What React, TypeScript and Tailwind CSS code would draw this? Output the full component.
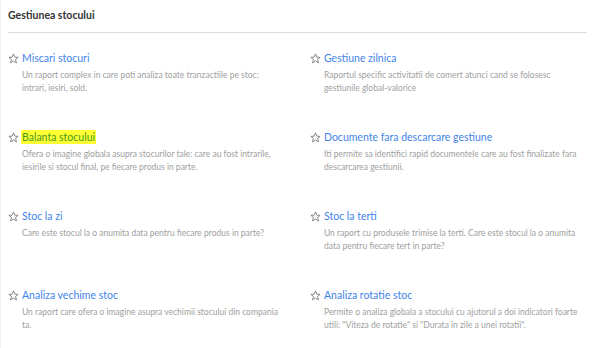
import React from "react";

const items = [
  { t: "Miscari stocuri", d: "Un raport complex in care poti analiza toate tranzactiile pe stoc: intrari, iesiri, sold." },
  { t: "Gestiune zilnica", d: "Raportul specific activitatii de comert atunci cand se folosesc gestiunile global-valorice" },
  { t: "Balanta stocului", d: "Ofera o imagine globala asupra stocurilor tale: care au fost intrarile, iesirile si stocul final, pe fiecare produs in parte.", hl: true },
  { t: "Documente fara descarcare gestiune", d: "Iti permite sa identifici rapid documentele care au fost finalizate fara descarcarea gestiunii." },
  { t: "Stoc la zi", d: "Care este stocul la o anumita data pentru fiecare produs in parte?" },
  { t: "Stoc la terti", d: "Un raport cu produsele trimise la terti. Care este stocul la o anumita data pentru fiecare tert in parte?" },
  { t: "Analiza vechime stoc", d: "Un raport care ofera o imagine asupra vechimii stocului din compania ta." },
  { t: "Analiza rotatie stoc", d: "Permite o analiza globala a stocului cu ajutorul a doi indicatori foarte utili: \"Viteza de rotatie\" si \"Durata in zile a unei rotatii\"." },
];

function Star() {
  return (
    <svg width="11" height="11" viewBox="0 0 24 24" fill="none" stroke="#707070" strokeWidth="1.8" strokeLinejoin="round" className="shrink-0">
      <polygon points="12,2 15,9 22,9.5 16.5,14 18.5,21.5 12,17.5 5.5,21.5 7.5,14 2,9.5 9,9" />
    </svg>
  );
}

export default function App() {
  return (
    <div className="w-[602px] h-[348px] bg-white border-l border-[#f0f0f0] overflow-hidden" style={{ fontFamily: "Lato, 'Open Sans', sans-serif" }}>
      <div className="pl-[7px] pt-[9px]">
        <div className="text-[10.5px] font-bold text-[#333] leading-[13px] pb-[10px] border-b border-[#dcdcdc] w-[579px]">Gestiunea stocului</div>
      </div>
      <div className="grid grid-cols-[302px_300px] pl-[7px] pt-[18px] gap-y-[40px]">
        {items.map((it, i) => (
          <div key={i} className="flex flex-col h-[39px]">
            <div className="flex items-center gap-[3px]">
              <Star />
              <span
                className={
                  it.hl
                    ? "text-[10.5px] leading-[14px] bg-[#ffff33] text-[#4a9a1c] px-[1px] -ml-[1px]"
                    : "text-[10.5px] leading-[14px] text-[#3f84ea]"
                }
              >
                {it.t}
              </span>
            </div>
            <div className="pl-[14px] pt-[4px] text-[8.5px] leading-[13px] text-[#a0a0a0] max-w-[275px]">{it.d}</div>
          </div>
        ))}
      </div>
    </div>
  );
}
